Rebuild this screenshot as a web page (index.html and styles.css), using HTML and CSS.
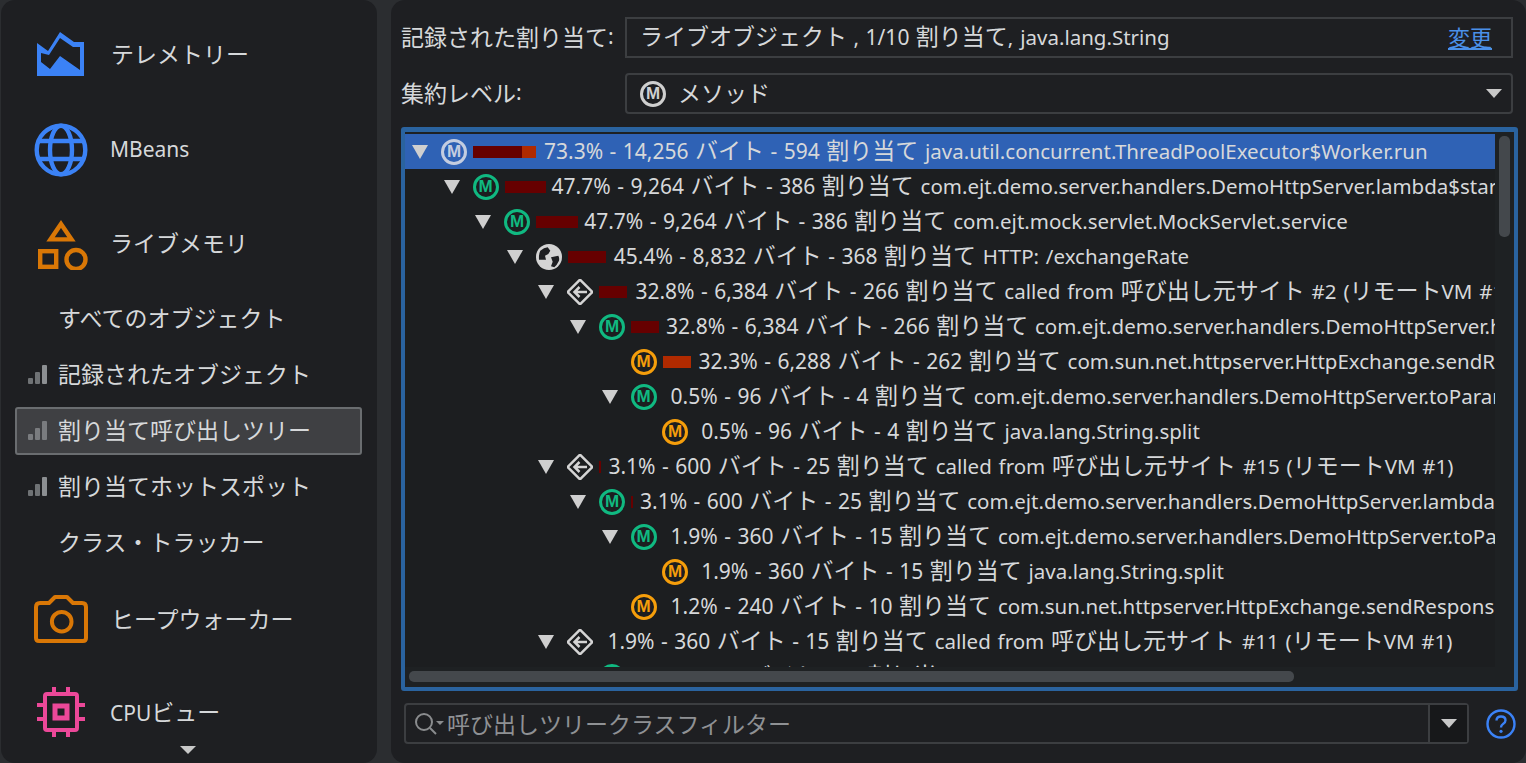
FILE: index.html
```html
<!DOCTYPE html>
<html lang="ja">
<head>
<meta charset="utf-8">
<title>割り当て呼び出しツリー</title>
<link rel="stylesheet" href="styles.css">
</head>
<body>
<aside class="sidebar">
  <div class="nav-big nav-tele">
    <svg class="nav-icon" viewBox="0 0 48 48"><path fill="#3b82f6" fill-rule="evenodd" d="M1 11 L12 19 L24 0 L38 10 L48 10 V44 H1 Z M5 21 V30 L14 37 L24 24 L44 38 V15 H37 L24 6 L13 23 Z"/></svg>
    <span class="j">テレメトリー</span>
  </div>
  <div class="nav-big nav-mbeans">
    <svg class="nav-icon" viewBox="0 0 54 54" fill="none" stroke="#3b82f6" stroke-width="4.4"><circle cx="27" cy="27" r="24.3"/><ellipse cx="27" cy="27" rx="11" ry="24.3"/><path d="M5 18 H49 M5 36 H49"/></svg>
    <span class="l">MBeans</span>
  </div>
  <div class="nav-big nav-live">
    <svg class="nav-icon" viewBox="0 0 54 54" fill="none" stroke="#d97706" stroke-width="4.4"><path d="M27 8 L37.5 23.4 H16.5 Z"/><rect x="6.2" y="35.2" width="16" height="15.6"/><circle cx="42" cy="43.5" r="9.5"/></svg>
    <span class="j">ライブメモリ</span>
  </div>
  <div class="nav-subs">
    <div class="nav-sub"><span class="j">すべてのオブジェクト</span></div>
    <div class="nav-sub"><svg class="bars" viewBox="0 0 19 19"><rect x="0" y="13" width="5" height="6" rx="1" fill="#6f7275"/><rect x="7" y="7" width="5" height="12" rx="1" fill="#6f7275"/><rect x="14" y="0" width="5" height="19" rx="1" fill="#8c8f92"/></svg><span class="j">記録されたオブジェクト</span></div>
    <div class="nav-sub nav-sel"><svg class="bars" viewBox="0 0 19 19"><rect x="0" y="13" width="5" height="6" rx="1" fill="#7a7c7f"/><rect x="7" y="7" width="5" height="12" rx="1" fill="#7a7c7f"/><rect x="14" y="0" width="5" height="19" rx="1" fill="#7a7c7f"/></svg><span class="j">割り当て呼び出しツリー</span></div>
    <div class="nav-sub"><svg class="bars" viewBox="0 0 19 19"><rect x="0" y="13" width="5" height="6" rx="1" fill="#6f7275"/><rect x="7" y="7" width="5" height="12" rx="1" fill="#6f7275"/><rect x="14" y="0" width="5" height="19" rx="1" fill="#8c8f92"/></svg><span class="j">割り当てホットスポット</span></div>
    <div class="nav-sub"><span class="j">クラス・トラッカー</span></div>
  </div>
  <div class="nav-big nav-heap">
    <svg class="nav-icon" viewBox="0 0 54 54" fill="none" stroke="#d97706" stroke-width="4"><path d="M2 15 Q2 11 6 11 H15 L21 5 H33 L39 11 H48 Q52 11 52 15 V46 Q52 49 49 49 H5 Q2 49 2 46 Z" stroke-linejoin="round"/><circle cx="27.7" cy="29.7" r="9.8"/></svg>
    <span class="j">ヒープウォーカー</span>
  </div>
  <div class="nav-big nav-cpu">
    <svg class="nav-icon" viewBox="0 0 54 54" fill="none" stroke="#ec4899" stroke-width="4"><rect x="11" y="9" width="32" height="36" rx="2"/><rect x="21" y="21" width="12" height="12" stroke-width="5"/><path d="M20 2 V9 M34 2 V9 M20 45 V52 M34 45 V52 M3 20 H11 M3 34 H11 M43 20 H51 M43 34 H51"/></svg>
    <span class="cpu-label"><span class="l">CPU</span><span class="j">ビュー</span></span>
  </div>
  <span class="more-arrow"></span>
</aside>

<main class="main">
  <div class="form-row">
    <label class="form-label"><span class="j">記録された割り当て</span><span class="l">:</span></label>
    <div class="field">
      <span class="field-text"><span class="j">ライブオブジェクト</span><span class="l"> , 1/10 </span><span class="j">割り当て</span><span class="n">, java.lang.String</span></span>
      <a class="change j">変更</a>
    </div>
  </div>
  <div class="form-row form-row-2">
    <label class="form-label"><span class="j">集約レベル</span><span class="l">:</span></label>
    <div class="field field-combo">
      <span class="mi gray">M</span>
      <span class="field-text combo-text j">メソッド</span>
      <span class="tri-small"></span>
    </div>
  </div>

  <section class="tree">
    <div class="tree-view">
      <div class="row row-sel" style="--lvl:0"><span class="tog"></span><span class="mi gray">M</span><span class="slot" style="width:71px"><i class="bar dark" style="width:49px"></i><i class="bar light" style="width:14px"></i></span><span class="txt"><span class="l">73.3% - 14,256 </span><span class="j">バイト</span><span class="l"> - 594 </span><span class="j">割り当て</span><span class="n"> java.util.concurrent.ThreadPoolExecutor$Worker.run</span></span></div>

      <div class="row" style="--lvl:1"><span class="tog"></span><span class="mi green">M</span><span class="slot" style="width:47px"><i class="bar dark" style="width:41px"></i></span><span class="txt"><span class="l">47.7% - 9,264 </span><span class="j">バイト</span><span class="l"> - 386 </span><span class="j">割り当て</span><span class="n"> com.ejt.demo.server.handlers.DemoHttpServer.lambda$start$0</span></span></div>

      <div class="row" style="--lvl:2"><span class="tog"></span><span class="mi green">M</span><span class="slot" style="width:48px"><i class="bar dark" style="width:42px"></i></span><span class="txt"><span class="l">47.7% - 9,264 </span><span class="j">バイト</span><span class="l"> - 386 </span><span class="j">割り当て</span><span class="n"> com.ejt.mock.servlet.MockServlet.service</span></span></div>

      <div class="row" style="--lvl:3"><span class="tog"></span><svg class="gi" viewBox="0 0 26 26"><circle cx="13" cy="13" r="13" fill="#d4d4d4"/><path fill="#1e1f22" d="M4.3 6.7 Q8 3.5 11.7 3.3 L14.3 6.7 L12.3 10 L9 11.7 L10 15.7 L3 15.7 Q2.6 10 4.3 6.7 Z M15 13.3 L22.3 11.7 Q23.6 14 23 16.7 Q21 21 18.3 23.3 L15 22.3 L16.7 17.7 Z"/></svg><span class="slot" style="width:46px"><i class="bar dark" style="width:38px"></i></span><span class="txt"><span class="l">45.4% - 8,832 </span><span class="j">バイト</span><span class="l"> - 368 </span><span class="j">割り当て</span><span class="n"> HTTP: /exchangeRate</span></span></div>

      <div class="row" style="--lvl:4"><span class="tog"></span><svg class="gi" viewBox="0 0 26 26" fill="none" stroke="#d4d4d4" stroke-width="2.5"><rect x="4.2" y="4.2" width="17.6" height="17.6" transform="rotate(45 13 13)" rx="1"/><path d="M20 13 H8 M12.5 8 L7.5 13 L12.5 18"/></svg><span class="slot" style="width:36px"><i class="bar dark" style="width:28px"></i></span><span class="txt"><span class="l">32.8% - 6,384 </span><span class="j">バイト</span><span class="l"> - 266 </span><span class="j">割り当て</span><span class="n"> called from </span><span class="j">呼び出し元サイト</span><span class="n"> #2 (</span><span class="j">リモート</span><span class="n">VM #1)</span></span></div>

      <div class="row" style="--lvl:5"><span class="tog"></span><span class="mi green">M</span><span class="slot" style="width:35px"><i class="bar dark" style="width:28px"></i></span><span class="txt"><span class="l">32.8% - 6,384 </span><span class="j">バイト</span><span class="l"> - 266 </span><span class="j">割り当て</span><span class="n"> com.ejt.demo.server.handlers.DemoHttpServer.handle</span></span></div>

      <div class="row" style="--lvl:6"><span class="tog none"></span><span class="mi orange">M</span><span class="slot" style="width:36px"><i class="bar light" style="width:28px"></i></span><span class="txt"><span class="l">32.3% - 6,288 </span><span class="j">バイト</span><span class="l"> - 262 </span><span class="j">割り当て</span><span class="n"> com.sun.net.httpserver.HttpExchange.sendResponseHeaders</span></span></div>

      <div class="row" style="--lvl:6"><span class="tog"></span><span class="mi green">M</span><span class="slot" style="width:8px"></span><span class="txt"><span class="l">0.5% - 96 </span><span class="j">バイト</span><span class="l"> - 4 </span><span class="j">割り当て</span><span class="n"> com.ejt.demo.server.handlers.DemoHttpServer.toParameters</span></span></div>

      <div class="row" style="--lvl:7"><span class="tog none"></span><span class="mi orange">M</span><span class="slot" style="width:7px"></span><span class="txt"><span class="l">0.5% - 96 </span><span class="j">バイト</span><span class="l"> - 4 </span><span class="j">割り当て</span><span class="n"> java.lang.String.split</span></span></div>

      <div class="row" style="--lvl:4"><span class="tog"></span><svg class="gi" viewBox="0 0 26 26" fill="none" stroke="#d4d4d4" stroke-width="2.5"><rect x="4.2" y="4.2" width="17.6" height="17.6" transform="rotate(45 13 13)" rx="1"/><path d="M20 13 H8 M12.5 8 L7.5 13 L12.5 18"/></svg><span class="slot" style="width:9px"><i class="bar dark" style="width:2px"></i></span><span class="txt"><span class="l">3.1% - 600 </span><span class="j">バイト</span><span class="l"> - 25 </span><span class="j">割り当て</span><span class="n"> called from </span><span class="j">呼び出し元サイト</span><span class="n"> #15 (</span><span class="j">リモート</span><span class="n">VM #1)</span></span></div>

      <div class="row" style="--lvl:5"><span class="tog"></span><span class="mi green">M</span><span class="slot" style="width:9px"><i class="bar dark" style="width:2px"></i></span><span class="txt"><span class="l">3.1% - 600 </span><span class="j">バイト</span><span class="l"> - 25 </span><span class="j">割り当て</span><span class="n"> com.ejt.demo.server.handlers.DemoHttpServer.lambda$handle$1</span></span></div>

      <div class="row" style="--lvl:6"><span class="tog"></span><span class="mi green">M</span><span class="slot" style="width:8px"></span><span class="txt"><span class="l">1.9% - 360 </span><span class="j">バイト</span><span class="l"> - 15 </span><span class="j">割り当て</span><span class="n"> com.ejt.demo.server.handlers.DemoHttpServer.toParameters</span></span></div>

      <div class="row" style="--lvl:7"><span class="tog none"></span><span class="mi orange">M</span><span class="slot" style="width:7px"></span><span class="txt"><span class="l">1.9% - 360 </span><span class="j">バイト</span><span class="l"> - 15 </span><span class="j">割り当て</span><span class="n"> java.lang.String.split</span></span></div>

      <div class="row" style="--lvl:6"><span class="tog none"></span><span class="mi orange">M</span><span class="slot" style="width:8px"></span><span class="txt"><span class="l">1.2% - 240 </span><span class="j">バイト</span><span class="l"> - 10 </span><span class="j">割り当て</span><span class="n"> com.sun.net.httpserver.HttpExchange.sendResponseHeaders</span></span></div>

      <div class="row" style="--lvl:4"><span class="tog"></span><svg class="gi" viewBox="0 0 26 26" fill="none" stroke="#d4d4d4" stroke-width="2.5"><rect x="4.2" y="4.2" width="17.6" height="17.6" transform="rotate(45 13 13)" rx="1"/><path d="M20 13 H8 M12.5 8 L7.5 13 L12.5 18"/></svg><span class="slot" style="width:8px"></span><span class="txt"><span class="l">1.9% - 360 </span><span class="j">バイト</span><span class="l"> - 15 </span><span class="j">割り当て</span><span class="n"> called from </span><span class="j">呼び出し元サイト</span><span class="n"> #11 (</span><span class="j">リモート</span><span class="n">VM #1)</span></span></div>

      <div class="row" style="--lvl:5"><span class="tog none"></span><span class="mi green">M</span><span class="slot" style="width:8px"></span><span class="txt"><span class="l">1.9% - 360 </span><span class="j">バイト</span><span class="l"> - 15 </span><span class="j">割り当て</span><span class="n"> com.ejt.demo.server.handlers.DemoHttpServer.lambda$handle$1</span></span></div>
    </div>
    <span class="scroll-v"></span>
    <span class="scroll-h"></span>
  </section>

  <div class="filter-row">
    <div class="filter">
      <svg class="search" viewBox="0 0 30 24" fill="none" stroke="#8a8c8e" stroke-width="2"><circle cx="10" cy="10" r="8"/><path d="M16 16 L22 22"/><path d="M22 9 H30 L26 13 Z" fill="#8a8c8e" stroke="none"/></svg>
      <span class="placeholder j">呼び出しツリークラスフィルター</span>
      <span class="filter-drop"><span class="tri-small"></span></span>
    </div>
    <svg class="help" viewBox="0 0 30 30"><circle cx="15" cy="15" r="13.5" fill="none" stroke="#3b82f6" stroke-width="2.4"/><path d="M10.5 11.5 Q10.5 7.5 15 7.5 Q19.5 7.5 19.5 11.2 Q19.5 13.5 17 15 Q15 16.2 15 18.5" fill="none" stroke="#3b82f6" stroke-width="2.4"/><circle cx="15" cy="22.3" r="1.6" fill="#3b82f6"/></svg>
  </div>
</main>
</body>
</html>
```
FILE: styles.css
```css
* { box-sizing: border-box; }
html, body { margin: 0; height: 100%; }
body {
  width: 1526px;
  height: 763px;
  overflow: hidden;
  background: #2b2d30;
  color: #d6d8da;
  display: flex;
  font-family: "Noto Sans", "Noto Sans CJK JP", sans-serif;
  font-size: 21px;
}
.j { font-family: "Noto Sans CJK JP", sans-serif; font-size: 23px; }
.l { font-family: "Noto Sans", "Noto Sans CJK JP", sans-serif; font-size: 21px; white-space: pre; word-spacing: 1px; }
.n { font-family: "Noto Sans", "Noto Sans CJK JP", sans-serif; font-size: 20.5px; white-space: pre; word-spacing: 1.5px; }

.sidebar {
  position: relative;
  width: 376px;
  height: 763px;
  margin-left: 1px;
  background: #1e1f22;
  border-radius: 14px;
  display: flex;
  flex-direction: column;
  overflow: hidden;
}
.nav-big { display: flex; align-items: center; flex: none; padding-left: 33px; gap: 22px; }
.nav-big > span { padding-bottom: 2px; }
.nav-icon { width: 54px; height: 54px; flex: none; }
.nav-tele { height: 96px; margin-top: 6px; padding-left: 35px; gap: 27px; }
.nav-tele .nav-icon { width: 48px; height: 48px; margin-top: 4px; }
.nav-mbeans { height: 96px; }
.nav-live { height: 90px; }
.nav-subs { margin-top: 2px; }
.nav-sub {
  height: 56px;
  display: flex;
  align-items: center;
  padding-left: 57px;
  padding-bottom: 2px;
  position: relative;
}
.bars { position: absolute; left: 27px; top: 19px; width: 19px; height: 19px; }
.nav-sel::before {
  content: "";
  box-sizing: border-box;
  position: absolute;
  left: 14px;
  top: 5px;
  width: 347px;
  height: 48px;
  background: #3f4043;
  border: 2px solid #6a6d70;
  border-radius: 3px;
}
.nav-sel .j { z-index: 1; position: relative; }
.nav-sel .bars { z-index: 1; }
.nav-heap { height: 98px; gap: 23px; }
.nav-cpu { height: 88px; }
.more-arrow {
  position: absolute;
  left: 179px;
  top: 746px;
  border-left: 8px solid transparent;
  border-right: 8px solid transparent;
  border-top: 8px solid #c8c8c8;
}

.main {
  margin-left: 14px;
  width: 1135px;
  height: 763px;
  background: #1e1f22;
  border-radius: 14px;
  padding: 17px 8px 0 10px;
  display: flex;
  flex-direction: column;
}
.form-row { display: flex; align-items: center; height: 41px; flex: none; padding-right: 5px; }
.form-row-2 { margin-top: 15px; }
.form-label { width: 224px; flex: none; display: flex; align-items: center; padding-bottom: 3px; }
.field {
  flex: 1;
  height: 41px;
  display: flex;
  align-items: center;
  border: 2px solid #3c3e41;
  padding: 0 19px 0 13px;
}
.field-text { flex: 1; white-space: pre; padding-bottom: 3px; line-height: 30px; }
.change { color: #4a90e8; text-decoration: underline; font-size: 22px; padding-bottom: 3px; line-height: 30px; }
.field-combo { border-radius: 4px; padding: 0 9px 0 13px; }
.combo-text { margin-left: 12px; }
.tri-small {
  display: block;
  border-left: 8px solid transparent;
  border-right: 8px solid transparent;
  border-top: 9px solid #c8c8c8;
}

.mi {
  width: 26px;
  height: 26px;
  flex: none;
  border: 3px solid currentColor;
  border-radius: 50%;
  display: flex;
  align-items: center;
  justify-content: center;
  font-family: "Liberation Sans", sans-serif;
  font-size: 17px;
  font-weight: 700;
  line-height: 1;
}
.gray { color: #cfcfcf; }
.green { color: #10b981; }
.orange { color: #f59e0b; }
.gi { width: 26px; height: 26px; flex: none; }

.tree {
  position: relative;
  margin-top: 13px;
  height: 564px;
  flex: none;
  border: 4px solid #2a639f;
  border-top-width: 5px;
  border-radius: 3px;
  padding-top: 2px;
  overflow: hidden;
  background: #1e2123;
}
.tree-view { width: 1090px; height: 533px; overflow: hidden; background: #1c1e20; }
.row {
  height: 35px;
  display: flex;
  align-items: center;
  padding-left: calc(7px + 31.6px * var(--lvl));
  white-space: nowrap;
}
.row-sel { background: #2f62b5; }
.row-sel .mi { color: #c4cde0; }
.tog {
  width: 16px;
  height: 14px;
  margin-right: 13px;
  flex: none;
  border-left: 8px solid transparent;
  border-right: 8px solid transparent;
  border-top: 14px solid #cfcfcf;
}
.tog.none { border-top-color: transparent; }
.slot { flex: none; display: flex; height: 12px; margin-left: 6px; }
.bar { display: block; height: 12px; flex: none; }
.dark { background: #660000; }
.light { background: #b02a00; }
.txt { white-space: pre; line-height: 30px; height: 30px; margin-bottom: 5px; }
.scroll-v {
  position: absolute;
  left: 1094px;
  top: 4px;
  width: 11px;
  height: 101px;
  background: #44484c;
  border-radius: 5px;
}
.scroll-h {
  position: absolute;
  left: 4px;
  top: 539px;
  width: 885px;
  height: 11px;
  background: #44484c;
  border-radius: 5px;
}

.filter-row { display: flex; align-items: center; margin-top: 12px; height: 41px; flex: none; padding-left: 3px; }
.filter {
  width: 1065px;
  height: 41px;
  display: flex;
  align-items: center;
  border: 2px solid #3c3e41;
  border-radius: 4px;
  padding-left: 8px;
}
.search { width: 30px; height: 24px; flex: none; }
.placeholder { flex: 1; color: #8f9194; margin-left: 3px; padding-bottom: 2px; line-height: 30px; }
.filter-drop {
  width: 39px;
  height: 100%;
  flex: none;
  display: flex;
  align-items: center;
  justify-content: center;
  background: #17181a;
  border-left: 2px solid #3c3e41;
}
.help { width: 30px; height: 30px; margin-left: 17px; flex: none; }
```
